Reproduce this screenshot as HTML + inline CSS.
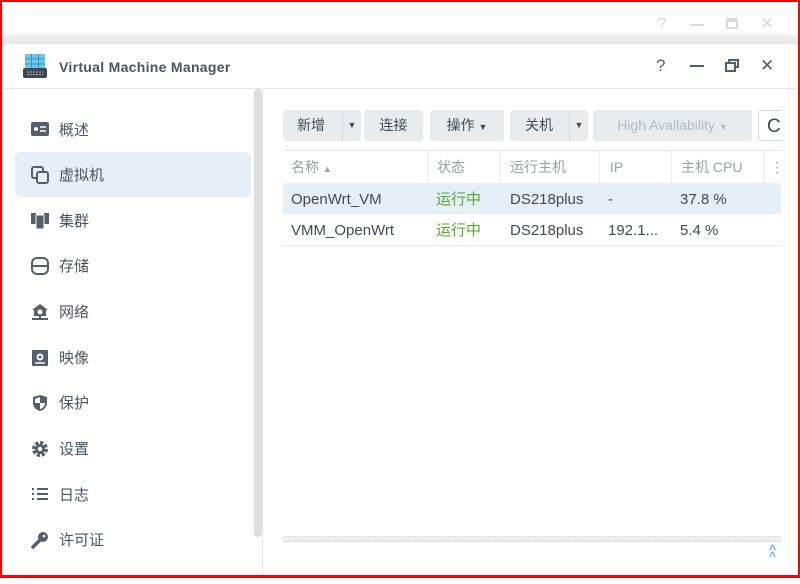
<!DOCTYPE html>
<html><head><meta charset="utf-8"><style>
*{box-sizing:border-box;margin:0;padding:0}
body{width:800px;height:578px;overflow:hidden;background:#fff;font-family:"Liberation Sans","Noto Sans CJK SC",sans-serif;position:relative;color:#414b55}
.frame{position:absolute;inset:0;border:2px solid #f00;border-bottom-width:3px;pointer-events:none;z-index:10}
.bgctl{position:absolute;top:14px;font-size:17px;color:#d8dadd}
.shadow{position:absolute;left:2px;right:2px;top:34px;height:12px;background:linear-gradient(#f3f3f3,#e4e4e4)}
.win{position:absolute;left:3px;right:3px;top:44px;bottom:3px;background:#fff;border-radius:4px 4px 0 0}
.hdr{height:45px;border-bottom:1px solid #e6e8ea;position:relative}
.title{position:absolute;left:56px;top:15px;font-weight:bold;font-size:14px;color:#4a5560;letter-spacing:.3px}
.ctl{position:absolute;top:12px;font-size:17px;color:#555f69}
.side{position:absolute;left:0;top:45px;width:260px;bottom:0;border-right:1px solid #e4e6e8}
.sb{position:absolute;left:251px;top:45px;width:8px;height:448px;background:#dedde0;border-radius:4px}
.item{position:absolute;left:12px;width:236px;height:45px;border-radius:6px;font-size:15px;color:#4a5560;padding-left:44px;line-height:47px}
.item.sel{background:#e5eff8}
.item svg{position:absolute;left:16px;top:14px}
.btn{position:absolute;top:66px;height:31px;background:#e8ecef;border-radius:3px;font-size:14px;line-height:31px;text-align:center;color:#414b55}
.th{position:absolute;top:107px;height:32px;font-size:14px;color:#9aa1a8;line-height:32px}
.td{position:absolute;font-size:15px;line-height:31px;color:#414b55}
.g{color:#5aaa2e}
.clip{position:absolute;left:0;top:0;width:779px;height:540px;overflow:hidden}
</style></head><body>
<div class="frame"></div>
<div class="bgctl" style="left:657px">?</div>
<div style="position:absolute;left:690px;top:24px;width:14px;height:2px;background:#d8dadd"></div>
<div style="position:absolute;left:726px;top:18px;width:12px;height:11px;border:2px solid #d8dadd;border-top-width:4px"></div>
<div class="bgctl" style="left:760px">✕</div>
<div class="shadow"></div>
<div class="win">
<div class="hdr">
<svg style="position:absolute;left:19px;top:9px" width="26" height="26" viewBox="0 0 26 26"><rect x="3" y="1" width="20" height="15" fill="#6fc7ea"/><path d="M3 6h20M3 11h20M9.5 1v15M16.5 1v15" stroke="#3a8fc4" stroke-width="1"/><rect x="1" y="15" width="24" height="10" rx="2" fill="#3f4750"/><path d="M5 19h16M5 21.5h16" stroke="#aab" stroke-width="1" stroke-dasharray="2 1"/></svg>
<div class="title">Virtual Machine Manager</div>
<div class="ctl" style="left:653px">?</div>
<div style="position:absolute;left:687px;top:21px;width:14px;height:2px;background:#555f69"></div>
<svg style="position:absolute;left:722px;top:15px" width="14" height="13" viewBox="0 0 14 13"><rect x="1" y="4" width="9" height="8" fill="none" stroke="#555f69" stroke-width="2"/><path d="M4 4V1h9v7h-3" fill="none" stroke="#555f69" stroke-width="2"/></svg>
<div class="ctl" style="left:757px">✕</div>
</div>
<div class="side">
<div class="item" style="top:18px"><svg width="18" height="16" viewBox="0 0 18 16"><rect x="0" y="1" width="18" height="14" rx="2" fill="#555f69"/><circle cx="5" cy="8" r="2" fill="#fff"/><path d="M9 6h6M9 10h6" stroke="#fff" stroke-width="1.5"/></svg>概述</div>
<div class="item sel" style="top:63px"><svg width="18" height="18" viewBox="0 0 18 18"><rect x="1" y="1" width="11" height="11" rx="2" fill="none" stroke="#555f69" stroke-width="2"/><rect x="6" y="6" width="11" height="11" rx="2" fill="#e5eff8" stroke="#555f69" stroke-width="2"/></svg>虚拟机</div>
<div class="item" style="top:109px"><svg width="18" height="18" viewBox="0 0 18 18"><rect x="0" y="1" width="5" height="11" fill="#555f69"/><rect x="13" y="1" width="5" height="11" fill="#555f69"/><rect x="5" y="3" width="8" height="14" fill="#555f69" stroke="#fff"/></svg>集群</div>
<div class="item" style="top:154px"><svg width="18" height="18" viewBox="0 0 18 18"><rect x="1" y="1" width="16" height="16" rx="5" fill="none" stroke="#555f69" stroke-width="2"/><path d="M1 9h16" stroke="#555f69" stroke-width="2"/></svg>存储</div>
<div class="item" style="top:200px"><svg width="18" height="18" viewBox="0 0 18 18"><path d="M9 1L1 7h2v6h12V7h2z" fill="#555f69"/><circle cx="9" cy="9" r="2.5" fill="#fff"/><path d="M1 16h16M9 13v3" stroke="#555f69" stroke-width="2"/></svg>网络</div>
<div class="item" style="top:246px"><svg width="18" height="18" viewBox="0 0 18 18"><rect x="1" y="1" width="16" height="16" rx="1" fill="#555f69"/><circle cx="9" cy="8" r="3.5" fill="#fff"/><circle cx="9" cy="8" r="1.5" fill="#555f69"/><path d="M4 14h10" stroke="#fff" stroke-width="1.5"/></svg>映像</div>
<div class="item" style="top:291px"><svg width="18" height="18" viewBox="0 0 18 18"><path d="M9 1L2 3v6c0 4 3 7 7 8 4-1 7-4 7-8V3z" fill="#555f69"/><path d="M9 9h5c0 3-2 5-5 6z" fill="#fff"/><path d="M9 3v6H4V5z" fill="#fff"/></svg>保护</div>
<div class="item" style="top:337px"><svg width="18" height="18" viewBox="0 0 18 18"><circle cx="9" cy="9" r="6" fill="none" stroke="#555f69" stroke-width="4" stroke-dasharray="3 1.7"/><circle cx="9" cy="9" r="5" fill="#555f69"/><circle cx="9" cy="9" r="2.2" fill="#fff"/></svg>设置</div>
<div class="item" style="top:383px"><svg width="18" height="16" viewBox="0 0 18 16"><path d="M1 3h2M6 3h11M1 8h2M6 8h11M1 13h2M6 13h11" stroke="#555f69" stroke-width="2"/></svg>日志</div>
<div class="item" style="top:428px"><svg width="18" height="18" viewBox="0 0 18 18"><circle cx="12" cy="6" r="5" fill="#555f69"/><path d="M9 9L2 16" stroke="#555f69" stroke-width="3.5" stroke-linecap="round"/><circle cx="13" cy="5" r="1.3" fill="#fff"/></svg>许可证</div>
</div>
<div class="sb"></div>
<div class="clip">
<div class="btn" style="left:280px;width:78px;text-align:left;padding-left:14px">新增<span style="position:absolute;left:59px;top:0;height:31px;border-left:1px solid #d5d9dd;width:19px;text-align:center;font-size:9px">▼</span></div>
<div class="btn" style="left:361px;width:59px">连接</div>
<div class="btn" style="left:427px;width:74px">操作 <span style="font-size:9px">▼</span></div>
<div class="btn" style="left:507px;width:78px;text-align:left;padding-left:15px">关机<span style="position:absolute;left:59px;top:0;height:31px;border-left:1px solid #d5d9dd;width:19px;text-align:center;font-size:9px">▼</span></div>
<div class="btn" style="left:590px;width:159px;color:#b3bac1">High Availability <span style="font-size:9px">▼</span></div>
<div class="btn" style="left:755px;width:40px;background:#fff;border:1px solid #d5d9dd;text-align:left;padding-left:8px;font-size:19px">C</div>
<div style="position:absolute;left:280px;top:106px;width:500px;border-top:1px solid #e4e6e8"></div>
<div class="th" style="left:288px">名称 <span style="font-size:9px">▲</span></div>
<div class="th" style="left:425px;border-left:1px solid #eee;padding-left:8px">状态</div>
<div class="th" style="left:497px;border-left:1px solid #eee;padding-left:9px">运行主机</div>
<div class="th" style="left:596px;border-left:1px solid #eee;padding-left:10px">IP</div>
<div class="th" style="left:668px;border-left:1px solid #eee;padding-left:9px">主机 CPU</div>
<div class="th" style="left:760px;border-left:1px solid #eee;padding-left:6px">⋮</div>
<div style="position:absolute;left:280px;top:139px;width:498px;height:31px;background:#e5eff8"></div>
<div class="td" style="left:288px;top:140px">OpenWrt_VM</div>
<div class="td g" style="left:433px;top:140px">运行中</div>
<div class="td" style="left:507px;top:140px">DS218plus</div>
<div class="td" style="left:605px;top:140px">-</div>
<div class="td" style="left:677px;top:140px">37.8 %</div>
<div class="td" style="left:288px;top:171px">VMM_OpenWrt</div>
<div class="td g" style="left:433px;top:171px">运行中</div>
<div class="td" style="left:507px;top:171px">DS218plus</div>
<div class="td" style="left:605px;top:171px">192.1...</div>
<div class="td" style="left:677px;top:171px">5.4 %</div>
<div style="position:absolute;left:280px;top:201px;width:498px;border-top:1px solid #e8eaec"></div>
</div>
<div style="position:absolute;left:280px;top:492px;width:498px;height:6px;background:#eceeef;border-top:1px dashed #dfe1e3;border-bottom:1px solid #d8dadc"></div>
<div style="position:absolute;left:766px;top:502px;color:#6aaee6;font-size:12px;line-height:7px;font-weight:bold">^<br>^</div>
</div>
</body></html>
